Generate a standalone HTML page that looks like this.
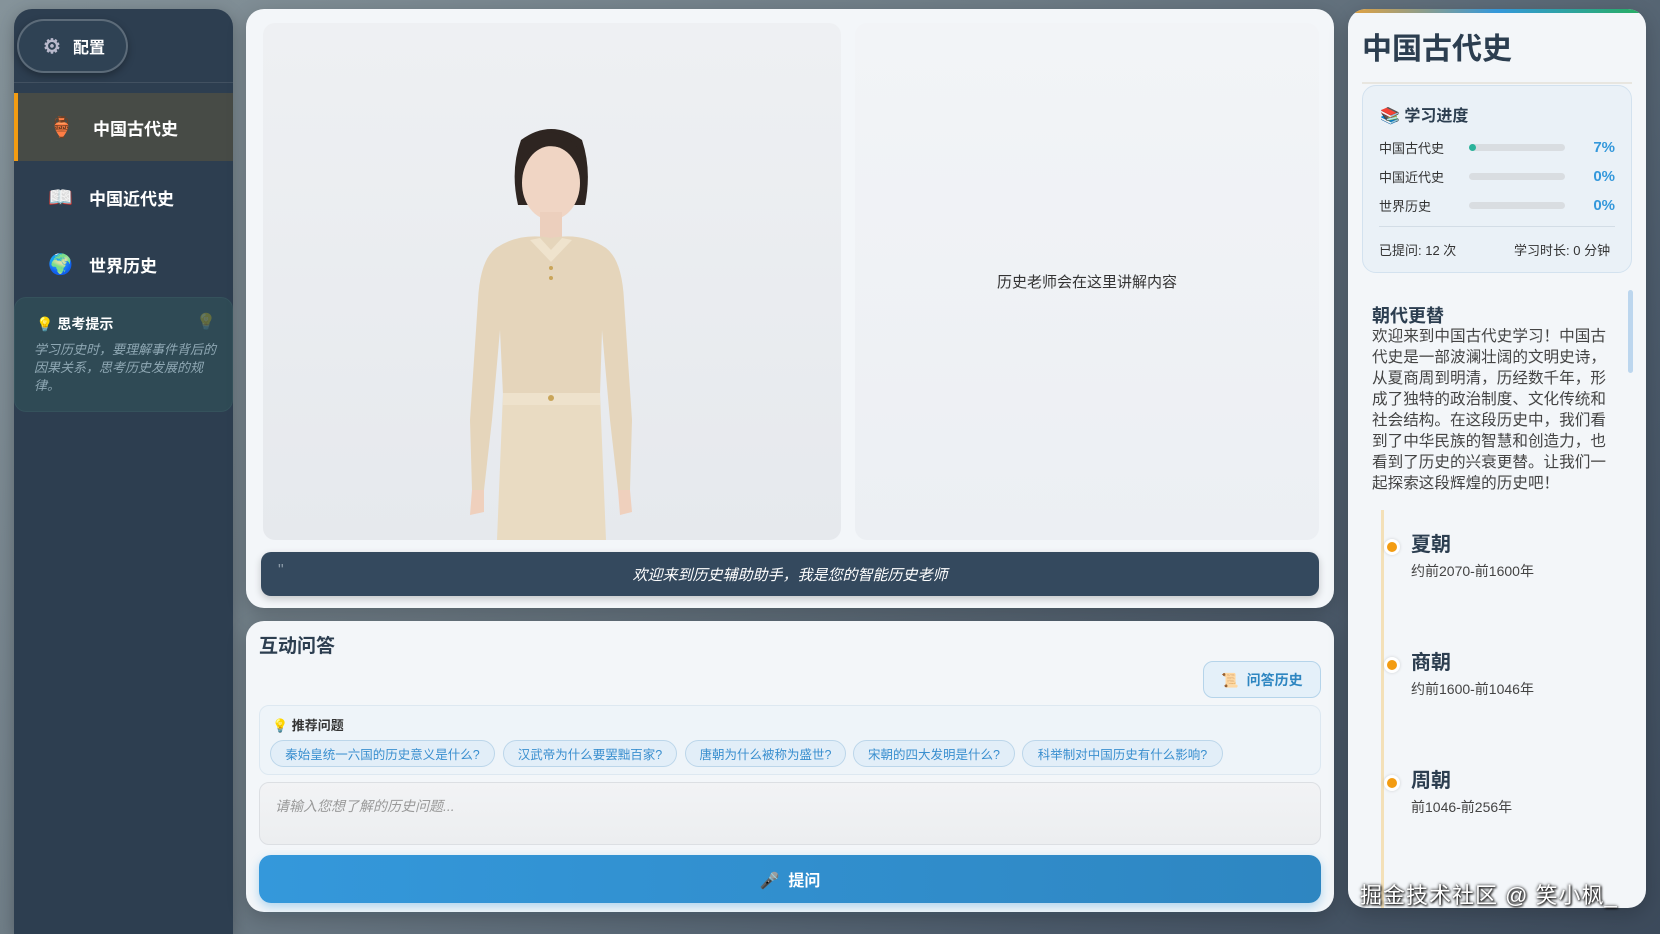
<!DOCTYPE html>
<html><head><meta charset="utf-8"><style>
*{box-sizing:border-box;margin:0;padding:0}
html,body{width:1660px;height:934px;overflow:hidden}
body{font-family:"Liberation Sans","Noto Sans CJK SC",sans-serif;background:linear-gradient(135deg,#85939a 0%,#6d7b85 40%,#4c5b6b 75%,#3c4a5b 100%);position:relative}
.abs{position:absolute}
.sb{left:14px;top:9px;width:219px;height:925px;background:#2d3e50;border-radius:18px 18px 0 0;box-shadow:0 4px 16px rgba(0,0,0,.25)}
.cfg{left:17px;top:19px;width:111px;height:54px;border:2px solid rgba(255,255,255,.22);border-radius:27px;background:#2f4254;color:#fff;font-weight:bold;font-size:16px;display:flex;align-items:center;padding-left:24px;box-shadow:0 3px 8px rgba(0,0,0,.3)}
.nav{left:14px;width:219px;height:68px;color:#fff;font-weight:bold;font-size:17px;display:flex;align-items:center;padding-left:75px}
.nav .ic{position:absolute;left:34px;font-size:20px}
.panel{background:#f3f6f9;border-radius:18px;box-shadow:0 6px 20px rgba(0,0,0,.2)}
.chip{top:740px;height:27px;border:1px solid #bcd6ea;background:#e2eef8;border-radius:14px;color:#3a8fcf;font-size:12.5px;display:flex;align-items:center;justify-content:center}
.row{left:1379px;width:236px;height:20px;font-size:13px;color:#333;display:flex;align-items:center}
.row .bar{position:absolute;left:90px;width:96px;height:7px;border-radius:4px;background:#d9dde1}
.row .pc{position:absolute;right:0;color:#3498db;font-weight:bold;font-size:15px}
.dy{left:1411px;font-size:20px;font-weight:bold;color:#2c3e50}
.dd{left:1411px;font-size:14px;color:#444}
.dot{left:1384px;width:16px;height:16px;border-radius:50%;background:#f39c12;border:3px solid #fff;box-shadow:0 0 3px rgba(0,0,0,.15)}
</style></head><body>

<div class="abs sb"></div>
<div class="abs cfg"><span style="font-size:20px;color:#b9b9cc;margin-right:12px">⚙</span>配置</div>
<div class="abs" style="left:14px;top:82px;width:219px;height:1px;background:rgba(255,255,255,.1)"></div>
<div class="abs nav" style="top:93px;background:#474b46;border-left:4px solid #f39c12"><span class="ic" style="left:31px">🏺</span>中国古代史</div>
<div class="abs nav" style="top:163px"><span class="ic">📖</span>中国近代史</div>
<div class="abs nav" style="top:230px"><span class="ic">🌍</span>世界历史</div>
<div class="abs" style="left:14px;top:297px;width:219px;height:115px;background:#2f4a55;border:1px solid #35525c;border-radius:12px"></div>
<div class="abs" style="left:36px;top:314px;font-size:14px;color:#fff;font-weight:bold">💡 思考提示</div>
<div class="abs" style="left:196px;top:312px;font-size:16px;opacity:.25">💡</div>
<div class="abs" style="left:34px;top:341px;width:190px;font-size:13px;line-height:18px;color:#8fa8b4;font-style:italic">学习历史时，要理解事件背后的因果关系，思考历史发展的规律。</div>

<div class="abs panel" style="left:246px;top:9px;width:1088px;height:599px"></div>
<div class="abs" style="left:263px;top:23px;width:578px;height:517px;border-radius:12px;background:linear-gradient(180deg,#eef0f3,#e6e9ed)"></div>
<svg class="abs" style="left:263px;top:23px" width="578" height="517" viewBox="263 23 578 517">
<path d="M521 140 Q551 118 582 140 Q592 170 585 205 L518 205 Q510 170 521 140Z" fill="#2e2521"/>
<ellipse cx="551" cy="183" rx="29" ry="37" fill="#f0d5c4"/>
<path d="M522 160 Q540 135 580 155 Q578 140 551 132 Q525 135 522 160Z" fill="#2e2521"/>
<rect x="540" y="212" width="22" height="28" fill="#eccfbd"/>
<path d="M496 248 Q520 232 551 238 Q582 232 606 248 Q622 260 624 300 L632 420 L630 490 L618 490 L610 420 L602 330 L600 395 L503 395 L500 330 L492 420 L484 490 L472 490 L470 420 L478 300 Q480 260 496 248Z" fill="#e5d5bb"/>
<path d="M503 393 L600 393 L606 540 L497 540Z" fill="#e9dbc2"/>
<rect x="503" y="393" width="97" height="12" fill="#eee2cc"/>
<path d="M530 240 L551 262 L572 240 L562 238 L551 250 L540 238Z" fill="#efe3cd"/>
<circle cx="551" cy="268" r="2" fill="#c9a55a"/><circle cx="551" cy="278" r="2" fill="#c9a55a"/><circle cx="551" cy="398" r="3" fill="#c9a55a"/>
<path d="M472 490 L470 515 L484 512 L484 490Z M618 490 L630 490 L632 512 L620 515Z" fill="#efd0bd"/>
</svg>
<div class="abs" style="left:855px;top:23px;width:464px;height:517px;border-radius:12px;background:linear-gradient(180deg,#f2f4f7,#eceff3);display:flex;align-items:center;justify-content:center;font-size:15px;color:#333">历史老师会在这里讲解内容</div>
<div class="abs" style="left:261px;top:552px;width:1058px;height:44px;background:#34495e;border-radius:10px;color:#fff;font-size:15px;font-style:italic;display:flex;align-items:center;justify-content:center;box-shadow:0 3px 8px rgba(0,0,0,.2)">欢迎来到历史辅助助手，我是您的智能历史老师</div>
<div class="abs" style="left:278px;top:562px;color:#8a9aa8;font-size:16px">"</div>

<div class="abs panel" style="left:246px;top:621px;width:1088px;height:291px"></div>
<div class="abs" style="left:259px;top:631px;font-size:19px;font-weight:bold;color:#2c3e50">互动问答</div>
<div class="abs" style="left:1203px;top:661px;width:118px;height:37px;border:1px solid #b5d4ea;background:#e4f0f9;border-radius:10px;color:#2e86c1;font-size:14px;font-weight:bold;display:flex;align-items:center;justify-content:center">📜&nbsp; 问答历史</div>
<div class="abs" style="left:259px;top:705px;width:1062px;height:70px;border:1px solid #dde8f1;background:#eef4f9;border-radius:10px"></div>
<div class="abs" style="left:272px;top:715px;font-size:13px;font-weight:bold;color:#333">💡 推荐问题</div>
<div class="abs chip" style="left:270px;width:225px">秦始皇统一六国的历史意义是什么?</div>
<div class="abs chip" style="left:503px;width:174px">汉武帝为什么要罢黜百家?</div>
<div class="abs chip" style="left:685px;width:161px">唐朝为什么被称为盛世?</div>
<div class="abs chip" style="left:853px;width:162px">宋朝的四大发明是什么?</div>
<div class="abs chip" style="left:1022px;width:201px">科举制对中国历史有什么影响?</div>
<div class="abs" style="left:259px;top:782px;width:1062px;height:63px;border:1px solid #dcdfe3;background:linear-gradient(180deg,#f2f3f5,#eceef0);border-radius:10px;padding:13px 15px;font-size:14px;font-style:italic;color:#999">请输入您想了解的历史问题...</div>
<div class="abs" style="left:259px;top:855px;width:1062px;height:48px;border-radius:12px;background:linear-gradient(90deg,#3498db,#2e86c1);color:#fff;font-size:16px;font-weight:bold;display:flex;align-items:center;justify-content:center;box-shadow:0 4px 10px rgba(52,152,219,.35)">🎤&nbsp; 提问</div>

<div class="abs panel" style="left:1348px;top:9px;width:298px;height:899px;overflow:hidden"><div style="height:4px;background:linear-gradient(90deg,#e6a23c,#3498db 50%,#27ae60)"></div></div>
<div class="abs" style="left:1362px;top:24px;font-size:30px;font-weight:bold;color:#2c3e50">中国古代史</div>
<div class="abs" style="left:1362px;top:82px;width:270px;height:2px;background:#e8e6e0"></div>
<div class="abs" style="left:1362px;top:85px;width:270px;height:188px;border:1px solid #d3e2ef;background:#eaf1f7;border-radius:14px"></div>
<div class="abs" style="left:1380px;top:102px;font-size:16px;font-weight:bold;color:#2c3e50">📚 学习进度</div>
<div class="abs row" style="top:137px">中国古代史<div class="bar"><div style="width:7px;height:7px;border-radius:4px;background:#2bb39b"></div></div><span class="pc">7%</span></div>
<div class="abs row" style="top:166px">中国近代史<div class="bar"></div><span class="pc">0%</span></div>
<div class="abs row" style="top:195px">世界历史<div class="bar"></div><span class="pc">0%</span></div>
<div class="abs" style="left:1379px;top:226px;width:236px;height:1px;background:#d3dde6"></div>
<div class="abs" style="left:1379px;top:240px;font-size:13px;color:#333">已提问: 12 次</div>
<div class="abs" style="left:1514px;top:240px;font-size:13px;color:#333">学习时长: 0 分钟</div>

<div class="abs" style="left:1628px;top:290px;width:5px;height:83px;border-radius:3px;background:#bcd6ee"></div>
<div class="abs" style="left:1372px;top:302px;font-size:18px;font-weight:bold;color:#2c3e50">朝代更替</div>
<div class="abs" style="left:1372px;top:326px;width:244px;font-size:15.6px;line-height:21px;color:#444">欢迎来到中国古代史学习！中国古代史是一部波澜壮阔的文明史诗，从夏商周到明清，历经数千年，形成了独特的政治制度、文化传统和社会结构。在这段历史中，我们看到了中华民族的智慧和创造力，也看到了历史的兴衰更替。让我们一起探索这段辉煌的历史吧！</div>
<div class="abs" style="left:1381px;top:510px;width:3px;height:398px;background:#f3e0b8"></div>
<div class="abs dot" style="top:539px"></div><div class="abs dy" style="top:528px">夏朝</div><div class="abs dd" style="top:561px">约前2070-前1600年</div>
<div class="abs dot" style="top:657px"></div><div class="abs dy" style="top:646px">商朝</div><div class="abs dd" style="top:679px">约前1600-前1046年</div>
<div class="abs dot" style="top:775px"></div><div class="abs dy" style="top:764px">周朝</div><div class="abs dd" style="top:797px">前1046-前256年</div>
<div class="abs" style="left:1360px;top:878px;font-size:22px;color:#fff;text-shadow:0 0 3px #000,1px 1px 2px #000;letter-spacing:1px">掘金技术社区 @ 笑小枫_</div>
</body></html>
